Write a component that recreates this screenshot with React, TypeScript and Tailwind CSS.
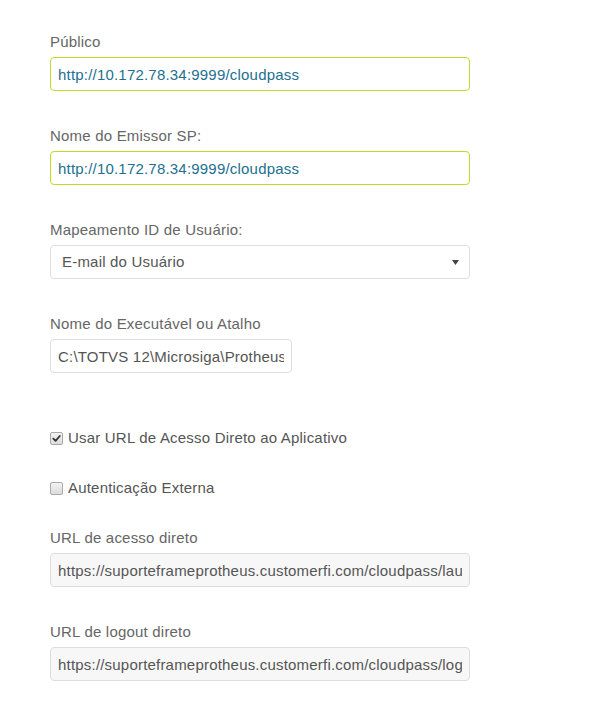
import React from 'react';

const font = { fontFamily: '"Liberation Sans", Arial, sans-serif' };

const Label: React.FC<{ children: React.ReactNode }> = ({ children }) => (
  <label className="block text-[15px] tracking-[0.2px] leading-5 text-[#666] mb-[5px]">{children}</label>
);

const Field: React.FC<{
  value: string;
  variant?: 'active' | 'plain' | 'readonly';
  className?: string;
}> = ({ value, variant = 'plain', className = '' }) => {
  const styles =
    variant === 'active'
      ? 'border-[#c4d92e] text-[#22708f] bg-white'
      : variant === 'readonly'
      ? 'border-[#dedede] text-[#555] bg-[#f7f7f7]'
      : 'border-[#dedede] text-[#555] bg-white';
  return (
    <input
      readOnly
      value={value}
      className={`h-[34px] rounded-[4px] border px-[7px] text-[15px] tracking-[0.2px] outline-none ${styles} ${className}`}
      style={font}
    />
  );
};

const Check: React.FC<{ checked?: boolean; label: string }> = ({ checked, label }) => (
  <div className="flex items-center h-5 text-[15px] tracking-[0.2px] text-[#555]">
    <span className="w-[13px] h-[13px] rounded-[2px] border border-[#a9a9a9] bg-gradient-to-b from-[#f2f2f2] to-[#dcdcdc] flex items-center justify-center mr-[5px]">
      {checked && (
        <svg width="9" height="9" viewBox="0 0 10 10">
          <path d="M1.5 5.2 L4 7.6 L8.6 2.2" stroke="#333" strokeWidth="2" fill="none" strokeLinecap="round" strokeLinejoin="round" />
        </svg>
      )}
    </span>
    <span>{label}</span>
  </div>
);

export default function App() {
  return (
    <div className="min-h-[711px] bg-white pl-[50px] pt-8" style={font}>
      <div className="w-[420px]">
        <div className="mb-[35px]">
          <Label>Público</Label>
          <Field value="http://10.172.78.34:9999/cloudpass" variant="active" className="w-full" />
        </div>

        <div className="mb-[35px]">
          <Label>Nome do Emissor SP:</Label>
          <Field value="http://10.172.78.34:9999/cloudpass" variant="active" className="w-full" />
        </div>

        <div className="mb-[35px]">
          <Label>Mapeamento ID de Usuário:</Label>
          <div className="h-[34px] rounded-[4px] border border-[#dedede] bg-white flex items-center justify-between pl-[11px] pr-[10px] text-[15px] tracking-[0.2px] text-[#555]">
            <span>E-mail do Usuário</span>
            <svg width="7" height="5" viewBox="0 0 7 5">
              <path d="M0 0 H7 L3.5 5 Z" fill="#444" />
            </svg>
          </div>
        </div>

        <div className="mb-[55px]">
          <Label>Nome do Executável ou Atalho</Label>
          <Field value="C:\TOTVS 12\Microsiga\Protheus\bin\smartclient.exe" className="w-[242px]" />
        </div>

        <div className="mb-[30px]">
          <Check checked label="Usar URL de Acesso Direto ao Aplicativo" />
        </div>

        <div className="mb-[30px]">
          <Check label="Autenticação Externa" />
        </div>

        <div className="mb-[35px]">
          <Label>URL de acesso direto</Label>
          <Field
            value="https://suporteframeprotheus.customerfi.com/cloudpass/launch"
            variant="readonly"
            className="w-full"
          />
        </div>

        <div>
          <Label>URL de logout direto</Label>
          <Field
            value="https://suporteframeprotheus.customerfi.com/cloudpass/logout"
            variant="readonly"
            className="w-full"
          />
        </div>
      </div>
    </div>
  );
}
